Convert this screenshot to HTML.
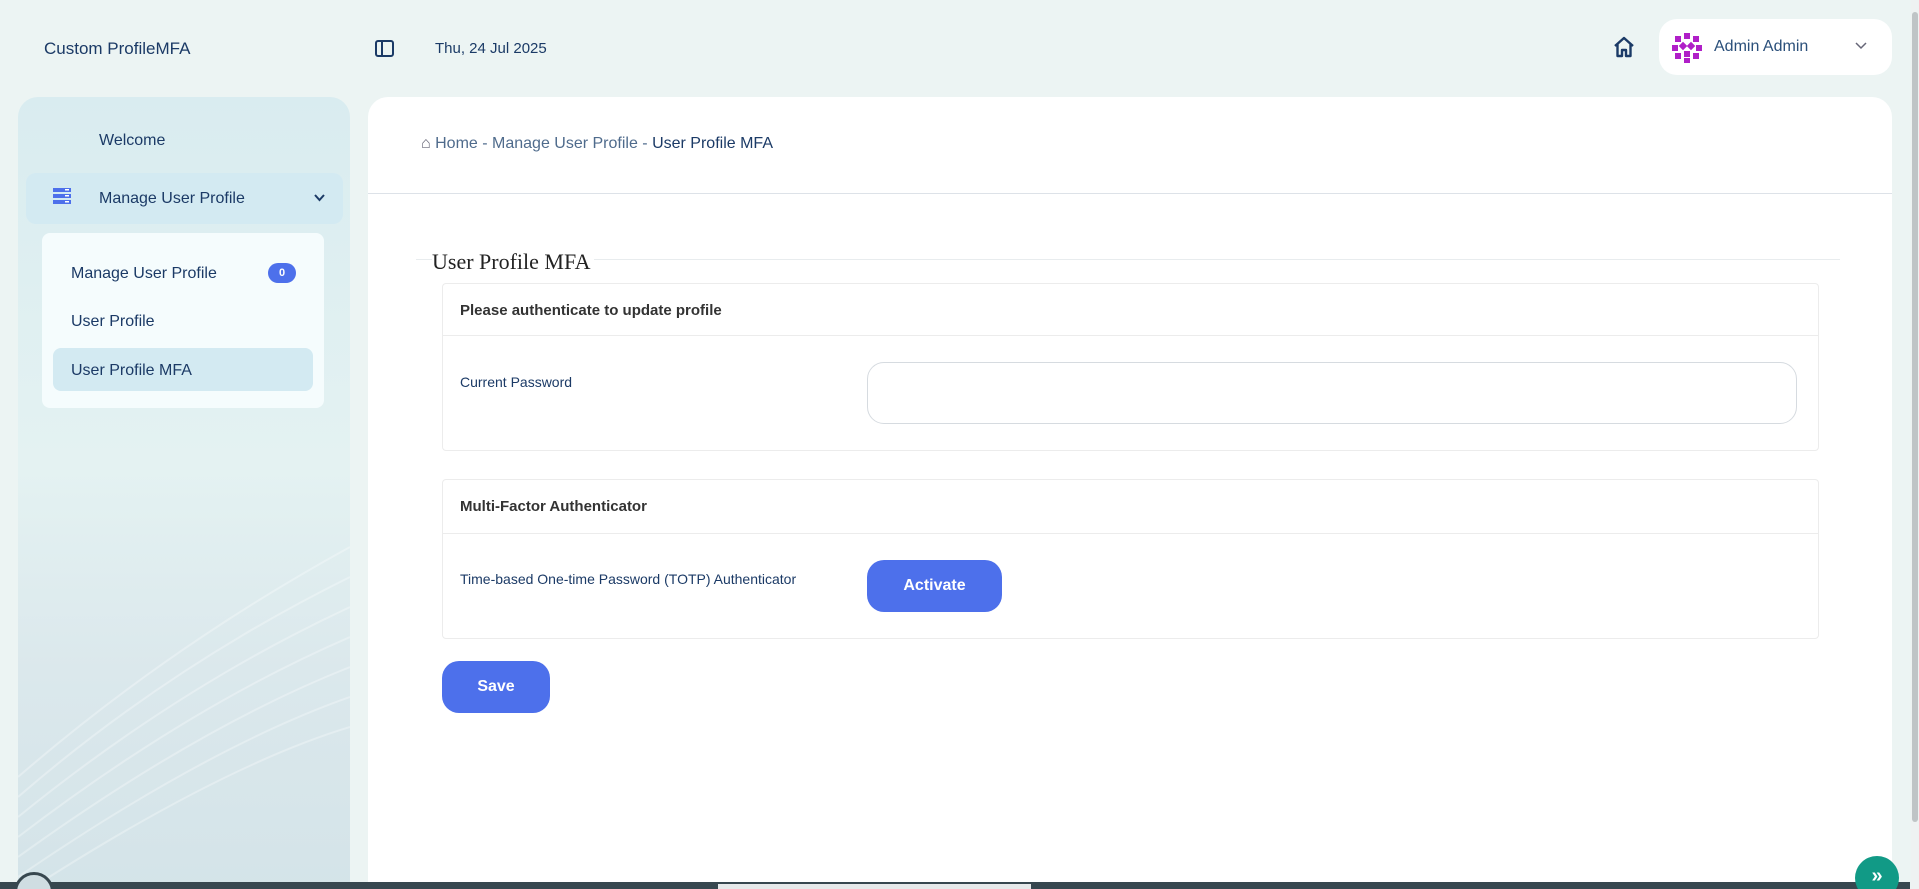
<!DOCTYPE html>
<html style="width:1919px;height:889px;overflow:hidden"><head><meta charset="utf-8"><style>
*{box-sizing:border-box;margin:0;padding:0}
body{width:1919px;height:889px;overflow:hidden;background:#ecf4f3;font-family:"Liberation Sans",sans-serif;color:#1b3a66;position:relative}
.abs{position:absolute}
.side{left:18px;top:97px;width:332px;height:820px;border-radius:20px;background:linear-gradient(180deg,#d9ecf0 0%,#e4f2f2 45%,#dbe8ec 70%,#d3e3e8 100%);overflow:hidden}
.main{left:368px;top:97px;width:1524px;height:820px;background:#fff;border-radius:20px}
.card{background:#fff;border:1px solid #ececec;border-radius:4px}
.btn{background:#4d70eb;color:#fff;font-weight:bold;font-size:16px;display:flex;align-items:center;justify-content:center;border-radius:17px}
</style></head><body>
<div class="abs" style="left:44px;top:39px;font-size:17px">Custom ProfileMFA</div>
<svg class="abs" style="left:375px;top:40px" width="19" height="17" viewBox="0 0 19 17"><rect x="1" y="1" width="17" height="15" rx="2" fill="none" stroke="#1b3a66" stroke-width="2"/><line x1="7" y1="1" x2="7" y2="16" stroke="#1b3a66" stroke-width="2"/></svg>
<div class="abs" style="left:435px;top:40px;font-size:15px">Thu, 24 Jul 2025</div>
<svg class="abs" style="left:1613px;top:36px" width="22" height="22" viewBox="0 0 22 22"><path d="M2 10 L11 2 L20 10 M4.5 8 V20 H9 V14 H13 V20 H17.5 V8" fill="none" stroke="#1b3a66" stroke-width="2.4" stroke-linejoin="round"/></svg>
<div class="abs" style="left:1659px;top:19px;width:233px;height:56px;background:#fff;border-radius:18px"></div>
<svg class="abs" style="left:1670px;top:31px" width="34" height="33" viewBox="0 0 34 33"><g fill="#b01fc8"><rect x="5" y="5" width="6" height="6"/><rect x="14" y="2" width="6" height="6"/><rect x="23" y="5" width="6" height="6"/><rect x="2" y="14" width="6" height="6"/><rect x="10" y="12" width="6" height="6" transform="rotate(45 13 15)"/><rect x="18" y="12" width="6" height="6" transform="rotate(45 21 15)"/><rect x="26" y="14" width="6" height="6"/><rect x="5" y="22" width="6" height="6"/><rect x="14" y="20" width="6" height="6"/><rect x="23" y="22" width="6" height="6"/><rect x="14" y="27" width="6" height="5"/></g></svg>
<div class="abs" style="left:1714px;top:38px;font-size:16px;color:#2a4f7a">Admin Admin</div>
<svg class="abs" style="left:1855px;top:42px" width="12" height="8" viewBox="0 0 12 8"><path d="M1 1 L6 6 L11 1" fill="none" stroke="#667" stroke-width="1.5"/></svg>

<div class="abs side">
<svg class="abs" style="left:0;top:300px" width="332" height="520" viewBox="0 0 332 520"><g fill="none" stroke="#fff" stroke-opacity="0.3" stroke-width="2"><path d="M0 380 Q150 250 332 150"/><path d="M0 400 Q150 270 332 180"/><path d="M0 420 Q160 290 332 210"/><path d="M0 440 Q170 310 332 240"/><path d="M0 460 Q180 330 332 270"/><path d="M0 480 Q190 350 332 300"/><path d="M0 500 Q200 370 332 330"/></g></svg>
<div class="abs" style="left:81px;top:35px;font-size:16px">Welcome</div>
<div class="abs" style="left:8px;top:76px;width:317px;height:51px;background:#d3eaf2;border-radius:10px"></div>
<svg class="abs" style="left:35px;top:91px" width="18" height="16" viewBox="0 0 18 16"><g fill="#4d70eb"><rect x="0" y="0" width="18" height="4"/><rect x="0" y="6" width="18" height="4"/><rect x="0" y="12" width="18" height="4"/></g><g fill="#fff"><rect x="12" y="1" width="4" height="1.5"/><rect x="12" y="7" width="4" height="1.5"/><rect x="12" y="13" width="4" height="1.5"/></g></svg>
<div class="abs" style="left:81px;top:93px;font-size:16px">Manage User Profile</div>
<svg class="abs" style="left:296px;top:97px" width="11" height="8" viewBox="0 0 11 8"><path d="M1 1 L5.5 6 L10 1" fill="none" stroke="#1b3a66" stroke-width="2"/></svg>
<div class="abs" style="left:24px;top:136px;width:282px;height:175px;background:#f5fcfd;border-radius:8px"></div>
<div class="abs" style="left:53px;top:168px;font-size:16px">Manage User Profile</div>
<div class="abs" style="left:250px;top:166px;width:28px;height:20px;background:#4d70eb;border-radius:10px;color:#fff;font-size:11px;font-weight:bold;text-align:center;line-height:20px">0</div>
<div class="abs" style="left:53px;top:216px;font-size:16px">User Profile</div>
<div class="abs" style="left:35px;top:251px;width:260px;height:43px;background:#d3eaf2;border-radius:8px"></div>
<div class="abs" style="left:53px;top:265px;font-size:16px">User Profile MFA</div>
</div>

<div class="abs main"></div>
<div class="abs" style="left:421px;top:135px;font-size:16px;color:#4f6b8c"><span style="color:#667">&#8962;</span> Home - Manage User Profile - <span style="color:#1b3a66">User Profile MFA</span></div>
<div class="abs" style="left:368px;top:193px;width:1524px;height:1px;background:#dde2e8"></div>
<div class="abs" style="left:416px;top:259px;width:1424px;height:1px;background:#e8ecee"></div>
<div class="abs" style="left:432px;top:249px;font-family:'Liberation Serif',serif;font-size:22px;color:#222;background:#fff;padding-right:4px">User Profile MFA</div>

<div class="abs card" style="left:442px;top:283px;width:1377px;height:168px"></div>
<div class="abs" style="left:443px;top:335px;width:1375px;height:1px;background:#ececec"></div>
<div class="abs" style="left:460px;top:302px;font-size:15px;font-weight:bold;color:#333">Please authenticate to update profile</div>
<div class="abs" style="left:460px;top:374px;font-size:14px">Current Password</div>
<div class="abs" style="left:867px;top:362px;width:930px;height:62px;border:1px solid #d6dbe0;border-radius:17px"></div>

<div class="abs card" style="left:442px;top:479px;width:1377px;height:160px"></div>
<div class="abs" style="left:443px;top:533px;width:1375px;height:1px;background:#ececec"></div>
<div class="abs" style="left:460px;top:498px;font-size:15px;font-weight:bold;color:#333">Multi-Factor Authenticator</div>
<div class="abs" style="left:460px;top:571px;font-size:14px">Time-based One-time Password (TOTP) Authenticator</div>
<div class="abs btn" style="left:867px;top:560px;width:135px;height:52px">Activate</div>
<div class="abs btn" style="left:442px;top:661px;width:108px;height:52px">Save</div>

<div class="abs" style="left:1911px;top:0;width:8px;height:889px;background:#eef2f2"></div>
<div class="abs" style="left:1912px;top:12px;width:6px;height:810px;background:#bfc4c6;border-radius:3px"></div>
<div class="abs" style="left:0;top:882px;width:1910px;height:7px;background:#37474f"></div>
<div class="abs" style="left:718px;top:884px;width:313px;height:5px;background:#e6e9ea"></div>
<div class="abs" style="left:14px;top:872px;width:40px;height:40px;border-radius:50%;border:3px solid #37474f;background:#cfdde2"></div>
<div class="abs" style="left:1855px;top:856px;width:44px;height:44px;border-radius:50%;background:#119a86;color:#fff;font-size:20px;font-weight:bold;text-align:center;line-height:40px">&#187;</div>
</body></html>
